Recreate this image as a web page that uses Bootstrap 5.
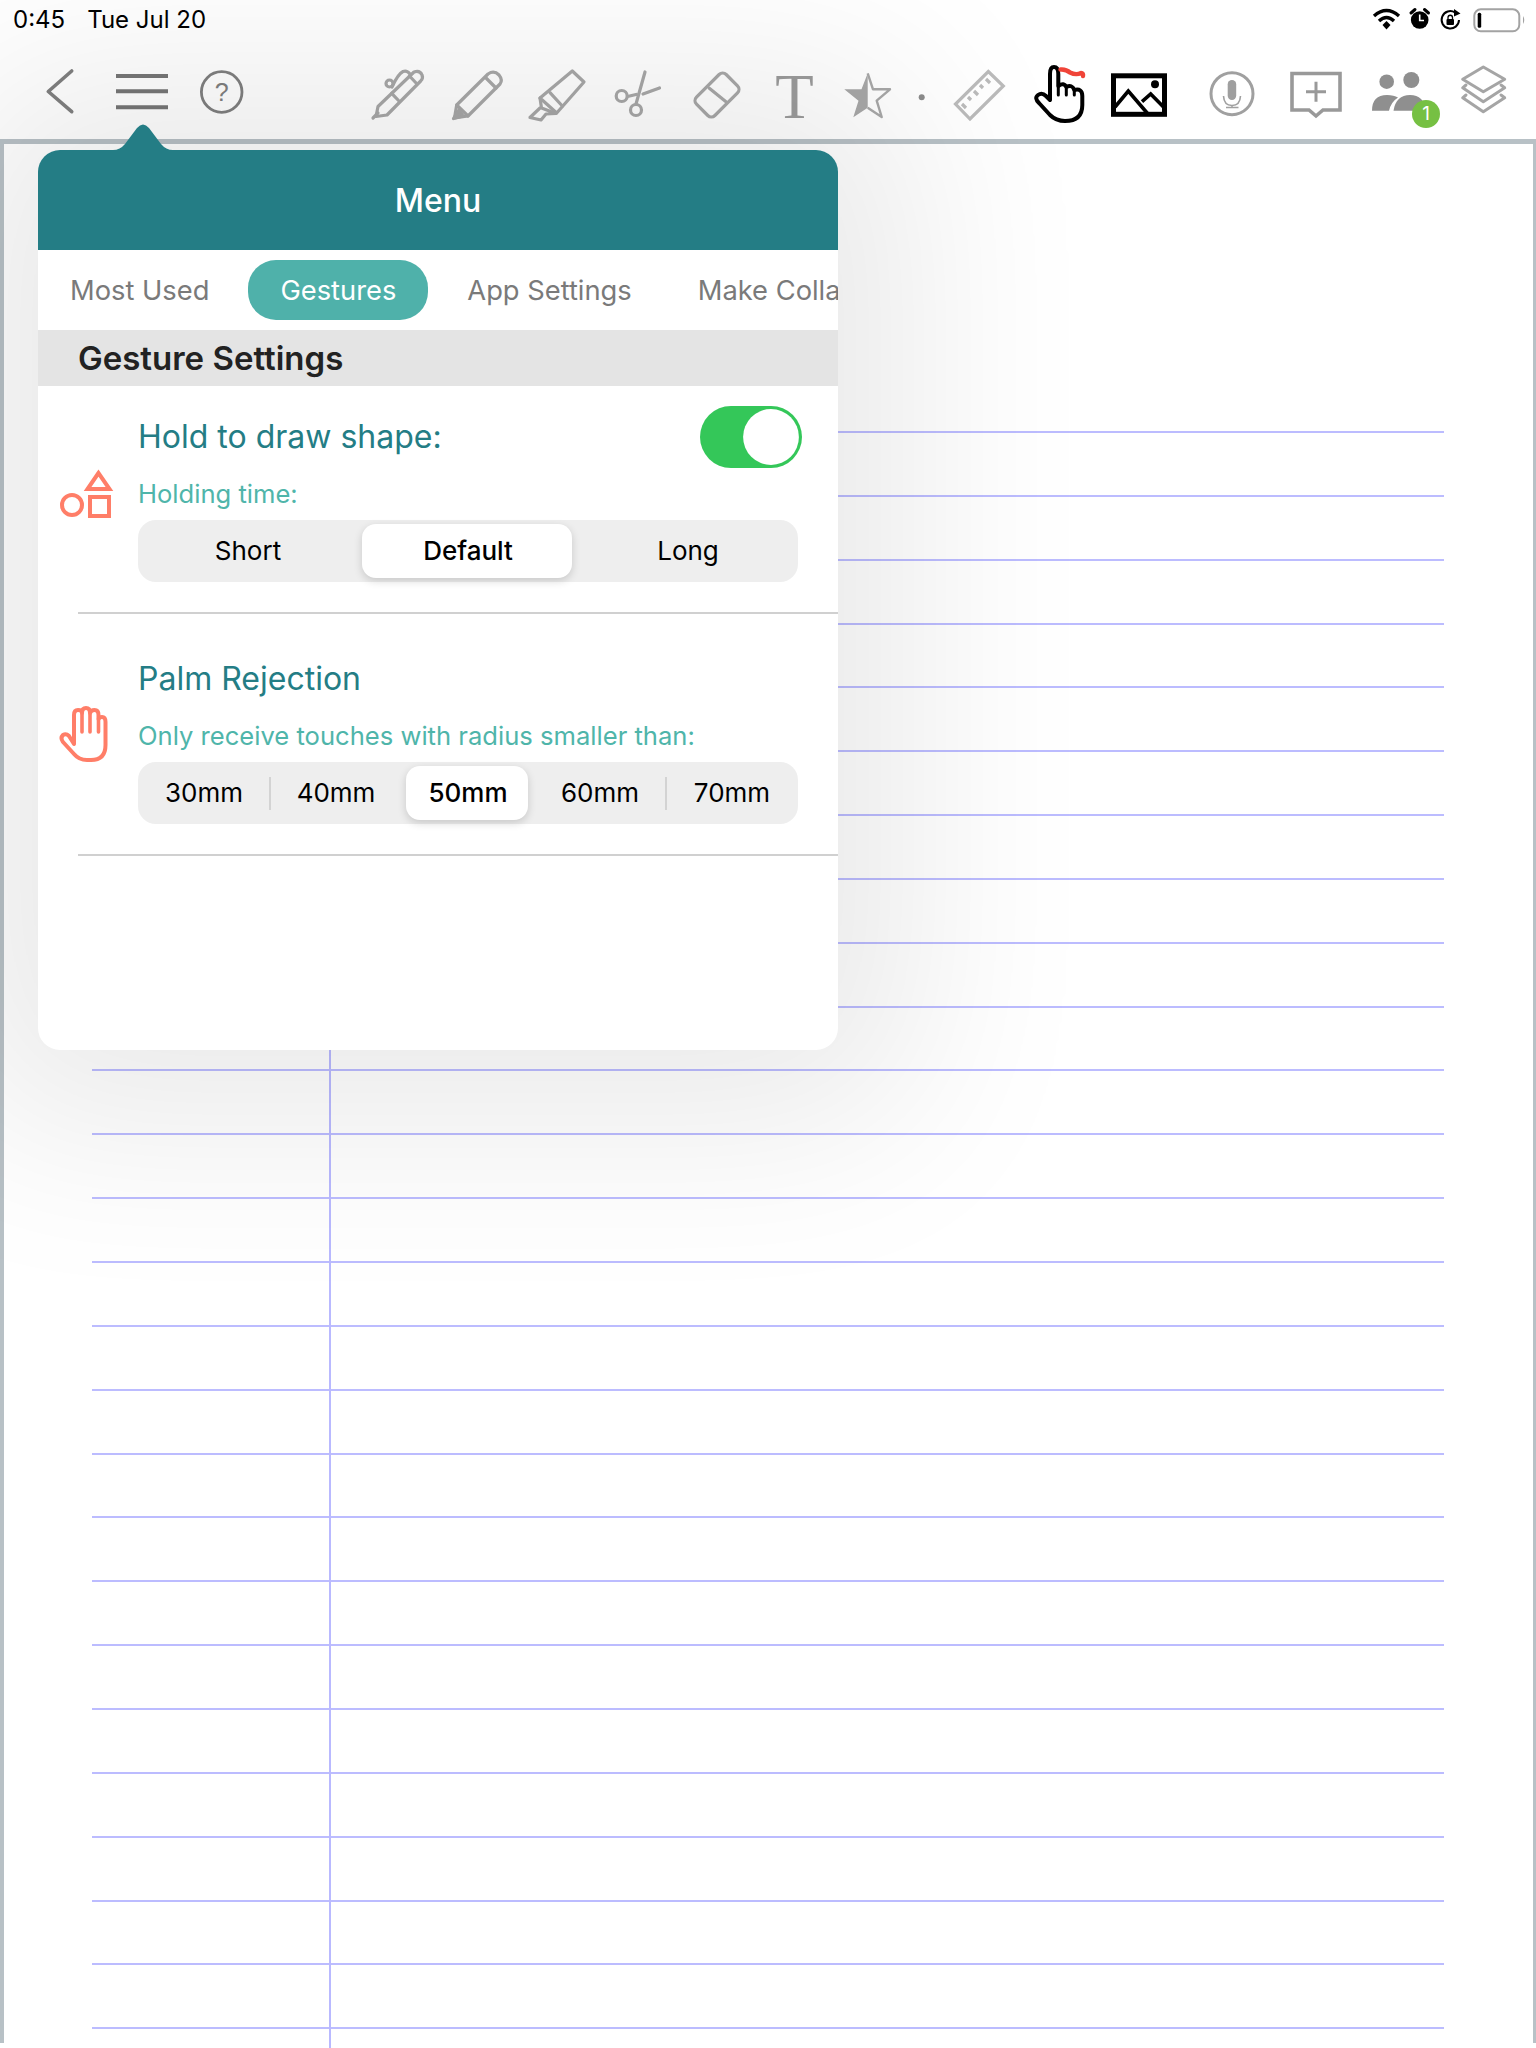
<!DOCTYPE html>
<html lang="en">
<head>
  <meta charset="UTF-8">
  <title>Menu - Gesture Settings</title>
  <link href="https://cdn.jsdelivr.net/npm/bootstrap@5.3.3/dist/css/bootstrap.min.css" rel="stylesheet">
  <style>
    html, body { height: 2048px; overflow: hidden; }
    body { background: #fff; font-family: "Inter", "Liberation Sans", sans-serif; color: #000; position: relative; }
    .status-row { height: 44px; padding: 0 0 0 13px; font-size: 24px; line-height: 40px; }
    .status-date { margin-left: 22px; }
    .status-icons { margin-left: auto; }
    .tool-row { height: 95px; padding-top: 8px; }
    .tool-row svg { display: block; flex: none; }
    .ic-grey { fill: none; stroke: #a8a8a8; stroke-width: 3.2; stroke-linecap: round; stroke-linejoin: round; }
    .ic-pale { stroke: #bbb; }
    .ic-layers { stroke: #a5a5a5; stroke-width: 3; }
    .ic-black { fill: none; stroke: #000; stroke-width: 4; stroke-linecap: round; stroke-linejoin: round; }
    .people-wrap { position: relative; }
    .people-num { position: absolute; left: 57px; top: 48px; width: 28px; height: 28px; background: #76c043; color: #fff; font-size: 19px; line-height: 28px; text-align: center; }
    .sheet { height: 1904px; border: solid #b8c1c6; border-width: 5px 3px 0 4px; padding: 287px 89px 0 88px; }
    .ruled { height: 1620px; background-image:
      linear-gradient(90deg, transparent 237px, #b9b9ff 237px, #b9b9ff 239px, transparent 239px),
      repeating-linear-gradient(180deg, #bcbcff 0, #bcbcff 2px, transparent 2px, transparent 63.85px); }
    .pop-panel { position: absolute; left: 38px; top: 150px; width: 800px; height: 900px; background: #fff; border-radius: 22px; box-shadow: 0 0 190px 75px rgba(0,0,0,.085); z-index: 10; }
    .pop-arrow { position: absolute; left: 75px; top: -28px; display: block; }
    .pop-head { height: 100px; background: #247d85; color: #fff; border-radius: 22px 22px 0 0; font-size: 32px; font-weight: 500; line-height: 101px; text-align: center; }
    .tab-strip { height: 80px; padding-left: 0; overflow: hidden; flex-wrap: nowrap; align-items: center; gap: 7px; }
    .tab-strip .nav-item:last-child { margin-left: -5px; }
    .tab-strip .nav-link { height: 60px; line-height: 61px; padding: 0 32px; font-size: 27.3px; color: #7a7a7a; white-space: nowrap; border-radius: 28px; }
    .tab-strip .nav-link.active { background: #4fb1aa; color: #fff; }
    .sec-head { height: 56px; background: #e4e4e4; padding-left: 40px; font-size: 33px; font-weight: 600; line-height: 56px; color: #222; }
    .set-icon { width: 100px; flex: none; }
    .set-icon svg { display: block; }
    .set-body { width: 660px; flex: none; padding-bottom: 30px; }
    .set-title { color: #247d85; font-size: 32px; line-height: 40px; }
    .set-hint { color: #4fb5aa; font-size: 25.6px; line-height: 30px; margin: 11px 0; }
    .set-line { margin-left: 40px; height: 2px; background: #d0d0d0; }
    .top-a { padding-top: 20px; }
    .top-b { padding-top: 45px; }
    .top-b .set-hint { margin-top: 22px; }
    .tog.form-check-input { width: 102px; height: 62px; margin: 0 -4px 0 0; float: none; border: 0; background-color: #34c759; border-radius: 31px; background-position: right center; background-size: contain;
      background-image: url("data:image/svg+xml,%3csvg xmlns='http://www.w3.org/2000/svg' viewBox='-4 -4 8 8'%3e%3ccircle r='3.6' fill='%23fff'/%3e%3c/svg%3e"); box-shadow: none; }
    .seg { height: 62px; background: #eee; border-radius: 18px; }
    .seg .btn { flex: 1 1 0; padding: 0 0 2px; border: 0; font-size: 26px; color: #000; border-radius: 14px; }
    .seg .btn.seg-on { position: relative; z-index: 0; font-weight: 500; }
    .seg .btn.seg-on::before { content: ""; position: absolute; inset: 4px 6px 4px 4px; z-index: -1; background: #fff; border-radius: 14px; box-shadow: 0 3px 8px rgba(0,0,0,.16); }
    .seg-sep { flex: none; width: 2px; height: 33px; margin: 0 -1px; background: #d3d3d3; }
  </style>
</head>
<body>
  <div class="status-row d-flex align-items-start">
    <span>0:45</span><span class="status-date">Tue Jul 20</span>
    <svg class="status-icons" width="176" height="44" viewBox="1360 0 176 44">
      <path d="M1374 16 Q1386.500 5 1399 16" fill="none" stroke="#000" stroke-width="3.400"/>
      <path d="M1379 21 Q1386.500 14 1394 21" fill="none" stroke="#000" stroke-width="3.400"/>
      <path d="M1382.500 25 L1386.500 21 L1390.500 25 L1386.500 29.500 Z" fill="#000"/>
      <circle cx="1419.700" cy="20" r="8.800" fill="#000"/>
      <path d="M1419.700 14.500 V20.500 H1424" fill="none" stroke="#fff" stroke-width="1.600"/>
      <path d="M1411 13 L1415 9.500 M1428.500 13 L1424.500 9.500" stroke="#000" stroke-width="3" stroke-linecap="round"/>
      <path d="M1459 20 A8.700 8.700 0 1 1 1455 12.500" fill="none" stroke="#000" stroke-width="2"/>
      <path d="M1454 9 L1460.500 13.500 L1454 16.500 Z" fill="#000"/>
      <rect x="1446.500" y="19" width="7.500" height="6" rx="1" fill="#000"/>
      <path d="M1448 19 V17.500 A2.200 2.200 0 0 1 1452.500 17.500 V19" fill="none" stroke="#000" stroke-width="1.300"/>
      <rect x="1474.300" y="9.300" width="45" height="22" rx="6.500" fill="none" stroke="#a3a3a3" stroke-width="2"/>
      <rect x="1477.700" y="12.700" width="3.500" height="15" rx="1.500" fill="#000"/>
      <path d="M1523 16 Q1525.500 20 1523 24 Z" fill="#a3a3a3"/>
    </svg>
  </div>

  <div class="tool-row d-flex align-items-start">
    <svg width="100" height="80" viewBox="0 52 100 80"><path d="M71.700 71 L48.300 91.500 L71.700 111.700" fill="none" stroke="#808080" stroke-width="3.600" stroke-linecap="round" stroke-linejoin="round"/></svg>
    <svg width="80" height="80" viewBox="100 52 80 80"><path d="M116 76 H168 M116 91.300 H168 M116 107.300 H168" stroke="#777" stroke-width="4"/></svg>
    <svg width="82" height="80" viewBox="180 52 82 80"><circle cx="221.700" cy="92" r="20.300" fill="none" stroke="#808080" stroke-width="2.800"/><text x="221.700" y="101" text-anchor="middle" font-family="Liberation Sans, sans-serif" font-size="25" fill="#808080">?</text></svg>
    <svg width="105" height="80" viewBox="262 52 105 80"></svg>
    <svg width="70" height="80" viewBox="367 52 70 80" class="ic-grey">
      <path d="M414 72 Q420 70 422 75 Q423.500 78 420.700 81 L387 115 L376 116.500 L378 106.500 Z"/>
      <path d="M391.700 93.300 L398.500 100.500 M409.500 76 L417 84 M392 87 Q398 74 403 71.500 Q407 70 410 74"/>
      <circle cx="389.500" cy="83.500" r="3.500"/>
      <path d="M373 118 L378 113"/>
    </svg>
    <svg width="80" height="80" viewBox="437 52 80 80" class="ic-grey">
      <path d="M456.700 105 L488 74 Q494 70 499 75 Q503 80 500 84 L468 116 L454.500 118 Z"/>
      <path d="M486 78 L496 88 M456.700 105 L468 116"/>
      <path d="M453.500 118.500 L459 110 L463 116 Z" fill="#a8a8a8"/>
    </svg>
    <svg width="80" height="80" viewBox="517 52 80 80" class="ic-grey">
      <path d="M572.300 71 L584 82 L556.700 113 L540 98 Z"/>
      <path d="M550 92.700 L562.300 106"/>
      <path d="M540 98 L541.500 108 L556 113.500 L546 114 L541 120 L530 117.500 L540 108" />
    </svg>
    <svg width="80" height="80" viewBox="597 52 80 80" class="ic-grey">
      <circle cx="621.700" cy="96" r="5.500"/><circle cx="636" cy="110" r="5.500"/>
      <path d="M645 72 L636 104 M627.500 96.500 L636 94.500 M643 94 L659.500 88"/>
    </svg>
    <svg width="80" height="80" viewBox="677 52 80 80" class="ic-grey">
      <rect x="696" y="82" width="42" height="26" rx="5" transform="rotate(-45 717 95)"/>
      <path d="M709.300 88.300 L726 101.700"/>
    </svg>
    <svg width="75" height="80" viewBox="757 52 75 80"><text x="794.500" y="118" text-anchor="middle" font-family="Liberation Serif, serif" font-size="63" fill="#9c9c9c">T</text></svg>
    <svg width="70" height="80" viewBox="832 52 70 80">
      <path d="M867.700 73.300 L861.500 89.300 H844.300 L858.500 100.700 L853.300 117.300 L867.700 107.700 Z" fill="#a8a8a8"/>
      <path d="M867.700 73.300 L873 89.300 H890 L876.700 100.700 L881.700 117 L867.700 107.700" fill="none" stroke="#a8a8a8" stroke-width="2.400" stroke-linejoin="round"/>
    </svg>
    <svg width="40" height="80" viewBox="902 52 40 80"><circle cx="921.700" cy="97.300" r="3" fill="#8c8c8c"/></svg>
    <svg width="78" height="80" viewBox="942 52 78 80" class="ic-grey ic-pale">
      <path d="M988.300 71.500 L1003.300 86 L970 119 L955.500 104 Z" stroke-linejoin="miter"/>
      <path d="M962 104 L966 108 M968 97 L971 100 M974 91 L978 95 M980 85 L983 88 M986 79 L990 83" stroke-linecap="butt"/>
    </svg>
    <svg width="80" height="80" viewBox="1020 52 80 80" class="ic-black">
      <path d="M1050 100 L1050 74 Q1050 67 1054 67 Q1058.300 67 1058.300 74 L1058.300 86 Q1064 82 1066.300 87 Q1072 84 1074.300 90 Q1082.300 88 1082.300 96 L1082.300 105 Q1082.300 121 1065 121 Q1056 121 1050 115 L1039 103 Q1034 98 1038 95 Q1042 92 1046 96 Z"/>
      <path d="M1058.300 86 V95 M1066.300 87 V95 M1074.300 90 V95" stroke-width="3"/>
      <path d="M1060.500 69.500 Q1066 69 1070 72.500 Q1076 75.500 1081 73 Q1083.500 73 1083 76" stroke="#f04438" stroke-width="4.400"/>
    </svg>
    <svg width="80" height="80" viewBox="1100 52 80 80">
      <rect x="1113.500" y="75.800" width="51" height="38.500" fill="none" stroke="#000" stroke-width="5"/>
      <path d="M1115 107 L1128.300 91 L1148 114 M1142 101.700 L1150.700 94 L1164 107.500" fill="none" stroke="#000" stroke-width="3.600"/>
      <circle cx="1155" cy="84.300" r="4" fill="#000"/>
    </svg>
    <svg width="100" height="80" viewBox="1180 52 100 80">
      <circle cx="1232" cy="93.700" r="21" fill="none" stroke="#a0a0a0" stroke-width="3"/>
      <rect x="1227.700" y="80" width="8.500" height="20" rx="4.200" fill="#9f9f9f"/>
      <path d="M1223.500 96 Q1224 105.500 1232 105.500 Q1240 105.500 1240.500 96 M1232 105.500 V107.500 M1226 107.500 H1238.500" fill="none" stroke="#a0a0a0" stroke-width="1.600"/>
    </svg>
    <svg width="75" height="80" viewBox="1280 52 75 80">
      <path d="M1292 73.500 H1340 V110 H1323 L1316 116 L1309 110 H1292 Z" fill="none" stroke="#999" stroke-width="3.600"/>
      <path d="M1306 91.700 H1326 M1316 81.700 V101.700" stroke="#999" stroke-width="3"/>
    </svg>
    <div class="people-wrap">
      <svg class="d-block" width="90" height="80" viewBox="1355 52 90 80" fill="#8f8f8f">
        <circle cx="1386.700" cy="81.700" r="7.300"/><circle cx="1411.300" cy="80" r="8"/>
        <path d="M1372 110.700 Q1372 95 1387 95 Q1394 95 1398 97.500 Q1391 102 1389 110.700 Z"/>
        <path d="M1393.500 110.700 Q1396 95 1410 95 Q1424 95 1426 110.700 Z"/>
      </svg>
      <span class="people-num rounded-circle">1</span>
    </div>
    <svg width="91" height="80" viewBox="1445 52 91 80" class="ic-grey ic-layers">
      <path d="M1483.300 67 L1504.700 79.300 L1483.300 91.700 L1462.700 79.300 Z"/>
      <path d="M1466 85 L1462.700 87.800 L1483.300 101.700 L1504.700 87.800 L1501 85"/>
      <path d="M1466 95 L1462.700 97.800 L1483.300 111.700 L1504.700 97.800 L1501 95"/>
    </svg>
  </div>

  <div class="sheet">
    <div class="ruled"></div>
  </div>

  <div class="pop-panel">
    <svg class="pop-arrow" width="60" height="28" viewBox="113 122 60 28"><path d="M113 150 Q120 150 125 144 L137 128 Q143 121 149 128 L161 144 Q166 150 173 150 Z" fill="#247d85"/></svg>
    <div class="pop-head">Menu</div>
    <ul class="nav nav-pills tab-strip">
      <li class="nav-item"><a class="nav-link" href="#">Most Used</a></li>
      <li class="nav-item"><a class="nav-link active" href="#">Gestures</a></li>
      <li class="nav-item"><a class="nav-link" href="#">App Settings</a></li>
      <li class="nav-item"><a class="nav-link" href="#">Make Collaboration</a></li>
    </ul>
    <div class="sec-head">Gesture Settings</div>

    <div class="d-flex align-items-center">
      <div class="set-icon">
        <svg width="100" height="70" viewBox="38 464 100 70" fill="none" stroke="#ff7e68" stroke-width="4">
          <path d="M98.500 473 L87.500 489 H109.500 Z"/>
          <circle cx="72" cy="505" r="10"/>
          <rect x="90" y="497" width="19" height="19"/>
        </svg>
      </div>
      <div class="set-body top-a">
        <div class="d-flex justify-content-between align-items-center">
          <div class="set-title">Hold to draw shape:</div>
          <div class="form-check form-switch p-0 m-0 d-flex"><input class="form-check-input tog" type="checkbox" role="switch" checked aria-label="Hold to draw shape"></div>
        </div>
        <div class="set-hint">Holding time:</div>
        <div class="seg d-flex">
          <button class="btn" type="button">Short</button>
          <button class="btn seg-on" type="button">Default</button>
          <button class="btn" type="button">Long</button>
        </div>
      </div>
    </div>
    <div class="set-line"></div>

    <div class="d-flex align-items-center">
      <div class="set-icon">
        <svg width="100" height="90" viewBox="38 690 100 90" fill="none" stroke="#ff7e68" stroke-width="4" stroke-linecap="round" stroke-linejoin="round">
          <path d="M74 745 L74 716 Q74 711 78 711 Q82 711 82 714 Q82 709 86 709 Q90 709 90 714 Q91 711 94.500 711 Q98.500 711 98.500 716 L98.500 720 Q99.500 718 102 718 Q105.500 718 105.500 723 L105.500 746 Q105.500 761 91 761 L87 761 Q79 761 74 755 L63 743 Q60 739 63 736 Q66 734 69 737 Z"/>
          <path d="M82 714 V733 M90 714 V733 M98.500 720 V733" stroke-width="3.600"/>
        </svg>
      </div>
      <div class="set-body top-b">
        <div class="set-title">Palm Rejection</div>
        <div class="set-hint">Only receive touches with radius smaller than:</div>
        <div class="seg d-flex align-items-stretch">
          <button class="btn" type="button">30mm</button>
          <span class="seg-sep align-self-center"></span>
          <button class="btn" type="button">40mm</button>
          <button class="btn seg-on" type="button">50mm</button>
          <button class="btn" type="button">60mm</button>
          <span class="seg-sep align-self-center"></span>
          <button class="btn" type="button">70mm</button>
        </div>
      </div>
    </div>
    <div class="set-line"></div>
  </div>

  <script src="https://cdn.jsdelivr.net/npm/bootstrap@5.3.3/dist/js/bootstrap.bundle.min.js"></script>
</body>
</html>
